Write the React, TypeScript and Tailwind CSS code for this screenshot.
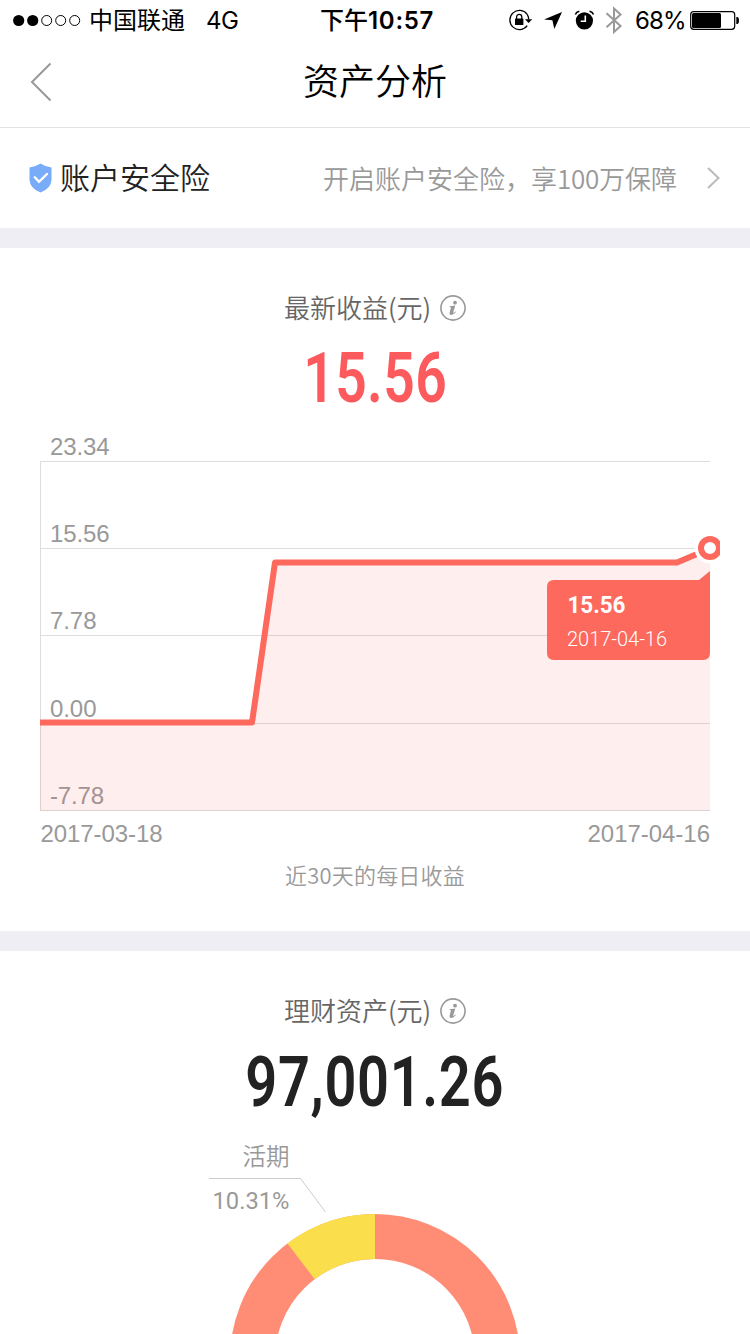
import type { ReactNode } from "react";

const gridLines = [
  { y: 31.5, label: "23.34", width: 59.5 },
  { y: 118.5, label: "15.56", width: 59.5 },
  { y: 205.5, label: "7.78", width: 46.5 },
  { y: 293.5, label: "0.00", width: 46.5 },
  { y: 380.5, label: "-7.78", width: 54 },
];

const StatusBar = () => {
  return (
    <div className="grid h-10 grid-cols-[308px_1fr_243px] items-center text-[24px] leading-[38px] text-black font-[Inter,'Noto_Sans_CJK_SC',sans-serif]">
      <div className="flex items-center pl-3 whitespace-nowrap">
        <svg width="70" height="14" viewBox="0 0 70 14">
          <circle cx="6.7" cy="7.5" r="5.6" />
          <circle cx="20.7" cy="7.5" r="5.6" />
          <circle cx="34.7" cy="7.5" r="5" fill="none" stroke="#000" />
          <circle cx="48.7" cy="7.5" r="5" fill="none" stroke="#000" />
          <circle cx="62.7" cy="7.5" r="5" fill="none" stroke="#000" />
        </svg>
        <span className="ml-[7px] pt-[2px]">中国联通</span>
        <span className="ml-[21px] pt-[2px] tracking-[-0.6px]">4G</span>
      </div>
      <div className="pt-[2px] pl-3 font-semibold whitespace-nowrap">
        <span className="font-medium">下午</span>
        <span className="tracking-[0.7px]">10:57</span>
      </div>
      <div className="flex items-center whitespace-nowrap">
        <svg className="h-10 w-[128px]" viewBox="507 0 128 40">
          <path
            d="M527.2 14.3A9.6 9.6 0 1 0 527.2 25.7"
            fill="none"
            stroke="#000"
            strokeWidth="1.3"
          />
          <path d="M527.2 14.3Q528.6 16.5 528.7 19.5" fill="none" stroke="#000" strokeWidth="1.3" />
          <path d="M525 19.2H532.2L528.6 23Z" />
          <rect x="515" y="18.5" width="8.4" height="6.6" rx="0.6" />
          <path d="M516.6 19V17A2.6 2.6 0 0 1 521.8 17V19" fill="none" stroke="#000" strokeWidth="1.3" />
          <path d="M562 12L544 19.4L552.4 20.2L554.3 29Z" />
          <circle cx="584.4" cy="20.8" r="8.6" />
          <path
            d="M575.3 14.5Q576.3 12 579.3 11.3M593.5 14.5Q592.5 12 589.5 11.3"
            fill="none"
            stroke="#000"
            strokeWidth="1.6"
          />
          <path d="M585.3 15.5V21.3H580.7" fill="none" stroke="#fff" strokeWidth="1.6" />
          <path
            d="M606.5 13.2L620.6 26L614 32V8.5L620.6 14.5L606.5 27.3"
            fill="none"
            stroke="#999"
            strokeWidth="2"
          />
        </svg>
        <span className="w-[54px] pt-[2px] tracking-[-0.9px]">68%</span>
        <svg className="h-10 w-[52px]" viewBox="689 0 52 40">
          <rect x="690.7" y="11.7" width="44" height="17.6" rx="3" fill="none" stroke="#000" strokeWidth="1.2" />
          <rect x="692" y="13" width="29" height="15" rx="1.5" />
          <path d="M736.3 17H737.6Q739 17.3 739 20.5T737.6 24H736.3Z" />
        </svg>
      </div>
    </div>
  );
};

const InfoIcon = () => {
  return (
    <svg width="26" height="26" viewBox="0 0 26 26">
      <circle cx="13" cy="13" r="12.1" fill="none" stroke="#999" strokeWidth="1.6" />
      <circle cx="15" cy="7.7" r="1.9" fill="#999" />
      <path
        d="M9.6 11.2L15.3 10.6L13.2 17.4Q12.9 18.7 15.4 16.6L15.9 17.1Q13.4 20.1 11 20Q9 19.7 9.7 17.2L11 12.3L9.5 11.9Z"
        fill="#999"
      />
    </svg>
  );
};

const SectionTitle = ({ children }: { children: ReactNode }) => {
  return (
    <div className="flex h-10 items-center justify-center gap-[9px] text-[26px] font-[350] text-[#666]">
      <span className="pb-1">{children}</span>
      <InfoIcon />
    </div>
  );
};

const ProfitChart = () => {
  return (
    <svg className="ml-10 block h-[420px] w-[680px]" viewBox="0 0 680 420">
      <g fill="#999" className="text-[24px] font-['Liberation_Sans',sans-serif]">
        {gridLines.map((line) => (
          <g key={line.y}>
            <path d={`M0 ${line.y}H670`} stroke="#ddd" />
            <text x="10" y={line.y - 6.5} textLength={line.width} lengthAdjust="spacing">
              {line.label}
            </text>
          </g>
        ))}
        <text x="0.5" y="412" textLength="122" lengthAdjust="spacing">2017-03-18</text>
        <text x="547.5" y="412" textLength="122.5" lengthAdjust="spacing">2017-04-16</text>
      </g>
      <path d="M0.5 31V381" stroke="#ddd" />
      <path d="M0 292.5H212L235 132.5H637L670 118V381H0Z" fill="#fc5a5a" fillOpacity="0.1" />
      <path
        d="M0 292.5H212L235 132.5H637L670 118.5"
        fill="none"
        stroke="#fd695d"
        strokeWidth="6"
        strokeLinejoin="round"
      />
      <circle cx="670" cy="118" r="15.5" fill="#fff" />
      <circle cx="670" cy="118" r="9" fill="#fff" stroke="#fd695d" strokeWidth="6" />
      <path
        d="M514 150H659L670 141V223Q670 230 663 230H514Q507 230 507 223V157Q507 150 514 150Z"
        fill="#fd695d"
      />
      <g fill="#fff" className="font-[Roboto,sans-serif]">
        <text x="527.5" y="182.5" textLength="58" lengthAdjust="spacingAndGlyphs" className="text-[24px] font-bold">
          15.56
        </text>
        <text x="527" y="216" textLength="100" lengthAdjust="spacing" className="text-[20px] font-light">
          2017-04-16
        </text>
      </g>
    </svg>
  );
};

const AssetDonut = () => {
  return (
    <svg className="block h-[200px] w-full" viewBox="0 1134 750 200">
      <text x="242.5" y="1164.5" fill="#999" className="text-[23.5px] font-[350]">
        活期
      </text>
      <path d="M209 1178.5H300.5L325.5 1212" fill="none" stroke="#ccc" />
      <text
        x="212.5"
        y="1209"
        fill="#999"
        textLength="77"
        lengthAdjust="spacingAndGlyphs"
        className="text-[24.5px] font-[450] font-[Roboto,sans-serif]"
      >
        10.31%
      </text>
      <circle cx="375" cy="1359" r="122.5" fill="none" stroke="#ff8d76" strokeWidth="45" />
      <path d="M375 1214A145 145 0 0 0 287.5 1243.4L314.7 1279.3A100 100 0 0 1 375 1259Z" fill="#fbde4b" />
    </svg>
  );
};

const App = () => {
  return (
    <div className="h-[1334px] w-[750px] overflow-hidden bg-white font-['Noto_Sans_CJK_SC',sans-serif]">
      <StatusBar />
      <div className="grid h-22 grid-cols-[1fr_auto_1fr] items-center border-b border-[#e2e2e2]">
        <svg className="mb-[3px] ml-[30px]" width="24" height="40" viewBox="0 0 24 40">
          <path d="M20.5 1.5L2 20L20.5 38.5" fill="none" stroke="#999" strokeWidth="2" />
        </svg>
        <h1 className="mb-[9px] text-[36px] leading-none font-[350] text-black">资产分析</h1>
      </div>

      <div className="flex h-25 items-center pr-[29px] pl-[29px]">
        <svg width="23" height="30" viewBox="0 0 23 30">
          <path
            d="M11.5 0.5Q16 3.5 22.5 4.5V17Q22 25.5 11.5 29.5Q1 25.5 0.5 17V4.5Q7 3.5 11.5 0.5Z"
            fill="#78acf9"
          />
          <path d="M5.8 14.3L10 18.8L18 11" fill="none" stroke="#fff" strokeWidth="2.4" strokeLinecap="round" />
        </svg>
        <span className="ml-2 pb-1 text-[30px] font-[350] text-[#222]">账户安全险</span>
        <span className="ml-auto pb-[2px] text-[26px] font-[350] text-[#999]">
          开启账户安全险，享<span className="tracking-[-0.3px]">100</span>万保障
        </span>
        <svg className="ml-[29px]" width="15" height="24" viewBox="0 0 15 24">
          <path d="M2 2L12.5 12L2 22" fill="none" stroke="#bbb" strokeWidth="2" />
        </svg>
      </div>

      <div className="h-5 bg-[#efeef4]" />

      <div className="h-[683px] pt-10">
        <SectionTitle>最新收益(元)</SectionTitle>
        <div className="flex h-[102px] items-center justify-center pb-px text-[70px] font-semibold text-[#fc5a5c] font-[Roboto,sans-serif]">
          <span className="inline-block origin-center scale-x-[0.79] tracking-[0.5px]">15.56</span>
        </div>
        <ProfitChart />
        <p className="pt-2 text-center text-[22px] font-[350] tracking-[0.2px] text-[#999]">近30天的每日收益</p>
      </div>

      <div className="h-5 bg-[#efeef4]" />

      <div className="pt-10">
        <SectionTitle>理财资产(元)</SectionTitle>
        <div className="flex h-[103px] items-center justify-center pb-px text-[70px] font-semibold text-[#222] font-[Roboto,sans-serif]">
          <span className="inline-block origin-center scale-x-[0.8] tracking-[0.8px]">97,001.26</span>
        </div>
        <AssetDonut />
      </div>
    </div>
  );
};

export default App;
